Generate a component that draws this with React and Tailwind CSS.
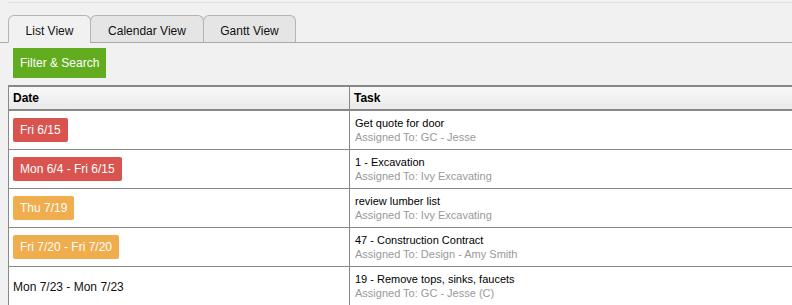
const rows = [
  { date: 'Fri 6/15', tone: 'red', task: 'Get quote for door', who: 'GC - Jesse' },
  { date: 'Mon 6/4 - Fri 6/15', tone: 'red', task: '1 - Excavation', who: 'Ivy Excavating' },
  { date: 'Thu 7/19', tone: 'orange', task: 'review lumber list', who: 'Ivy Excavating' },
  { date: 'Fri 7/20 - Fri 7/20', tone: 'orange', task: '47 - Construction Contract', who: 'Design - Amy Smith' },
  { date: 'Mon 7/23 - Mon 7/23', tone: null, task: '19 - Remove tops, sinks, faucets', who: 'GC - Jesse (C)' },
];

const tabs = [
  { label: 'List View', w: 'w-[83px]' },
  { label: 'Calendar View', w: 'w-[114px]' },
  { label: 'Gantt View', w: 'w-[93px]' },
];

function DateCell({ date, tone }) {
  if (!tone) return <span className="text-[12px] text-[#111]">{date}</span>;
  const color = tone === 'red' ? 'bg-[#d9534f]' : 'bg-[#f0ad4e]';
  return (
    <span className={`inline-block h-6 px-[7px] leading-6 text-[12px] text-white rounded-[2px] ${color}`}>
      {date}
    </span>
  );
}

export default function App() {
  return (
    <div className="h-[305px] w-[792px] overflow-hidden bg-[#f1f1f1] font-['Liberation_Sans',Arial,sans-serif]">
      <div className="ml-2 mt-[2px] h-px bg-[#e2e2e2]" />

      {/* Tabs */}
      <div className="mt-3 flex border-b border-[#a8a8a8] pl-2">
        {tabs.map((t, i) => (
          <div
            key={t.label}
            className={`-mb-px h-[28px] rounded-t-[6px] border border-[#b4b4b4] pt-[6px] text-center text-[12px] text-[#111] ${t.w} ${
              i === 0 ? 'border-b-[#f1f1f1] bg-[#f1f1f1]' : '-ml-px border-b-[#a8a8a8] bg-[#e5e5e5]'
            }`}
          >
            {t.label}
          </div>
        ))}
      </div>

      <button className="ml-[13px] mt-[5px] h-[30px] bg-[#61ad1f] px-[7px] text-[12px] text-white">
        Filter &amp; Search
      </button>

      {/* Task table */}
      <table className="ml-2 mt-[7px] w-[800px] border-collapse bg-white">
        <thead>
          <tr className="h-[24px] bg-gradient-to-b from-[#f9f9f9] to-[#e9e9e9]">
            <th className="w-[341px] border-y-2 border-l border-r border-[#888] px-1 text-left text-[12px] font-bold text-black">
              Date
            </th>
            <th className="border-y-2 border-l border-[#888] px-1 text-left text-[12px] font-bold text-black">
              Task
            </th>
          </tr>
        </thead>
        <tbody>
          {rows.map((r) => (
            <tr key={r.task} className="h-[39px]">
              <td className="border-b border-l border-r border-[#888] px-1 align-middle">
                <DateCell date={r.date} tone={r.tone} />
              </td>
              <td className="border-b border-l border-[#888] px-[5px] align-middle text-[11px] leading-[14px]">
                <div className="text-black">{r.task}</div>
                <div className="text-[#999]">Assigned To: {r.who}</div>
              </td>
            </tr>
          ))}
        </tbody>
      </table>
    </div>
  );
}
